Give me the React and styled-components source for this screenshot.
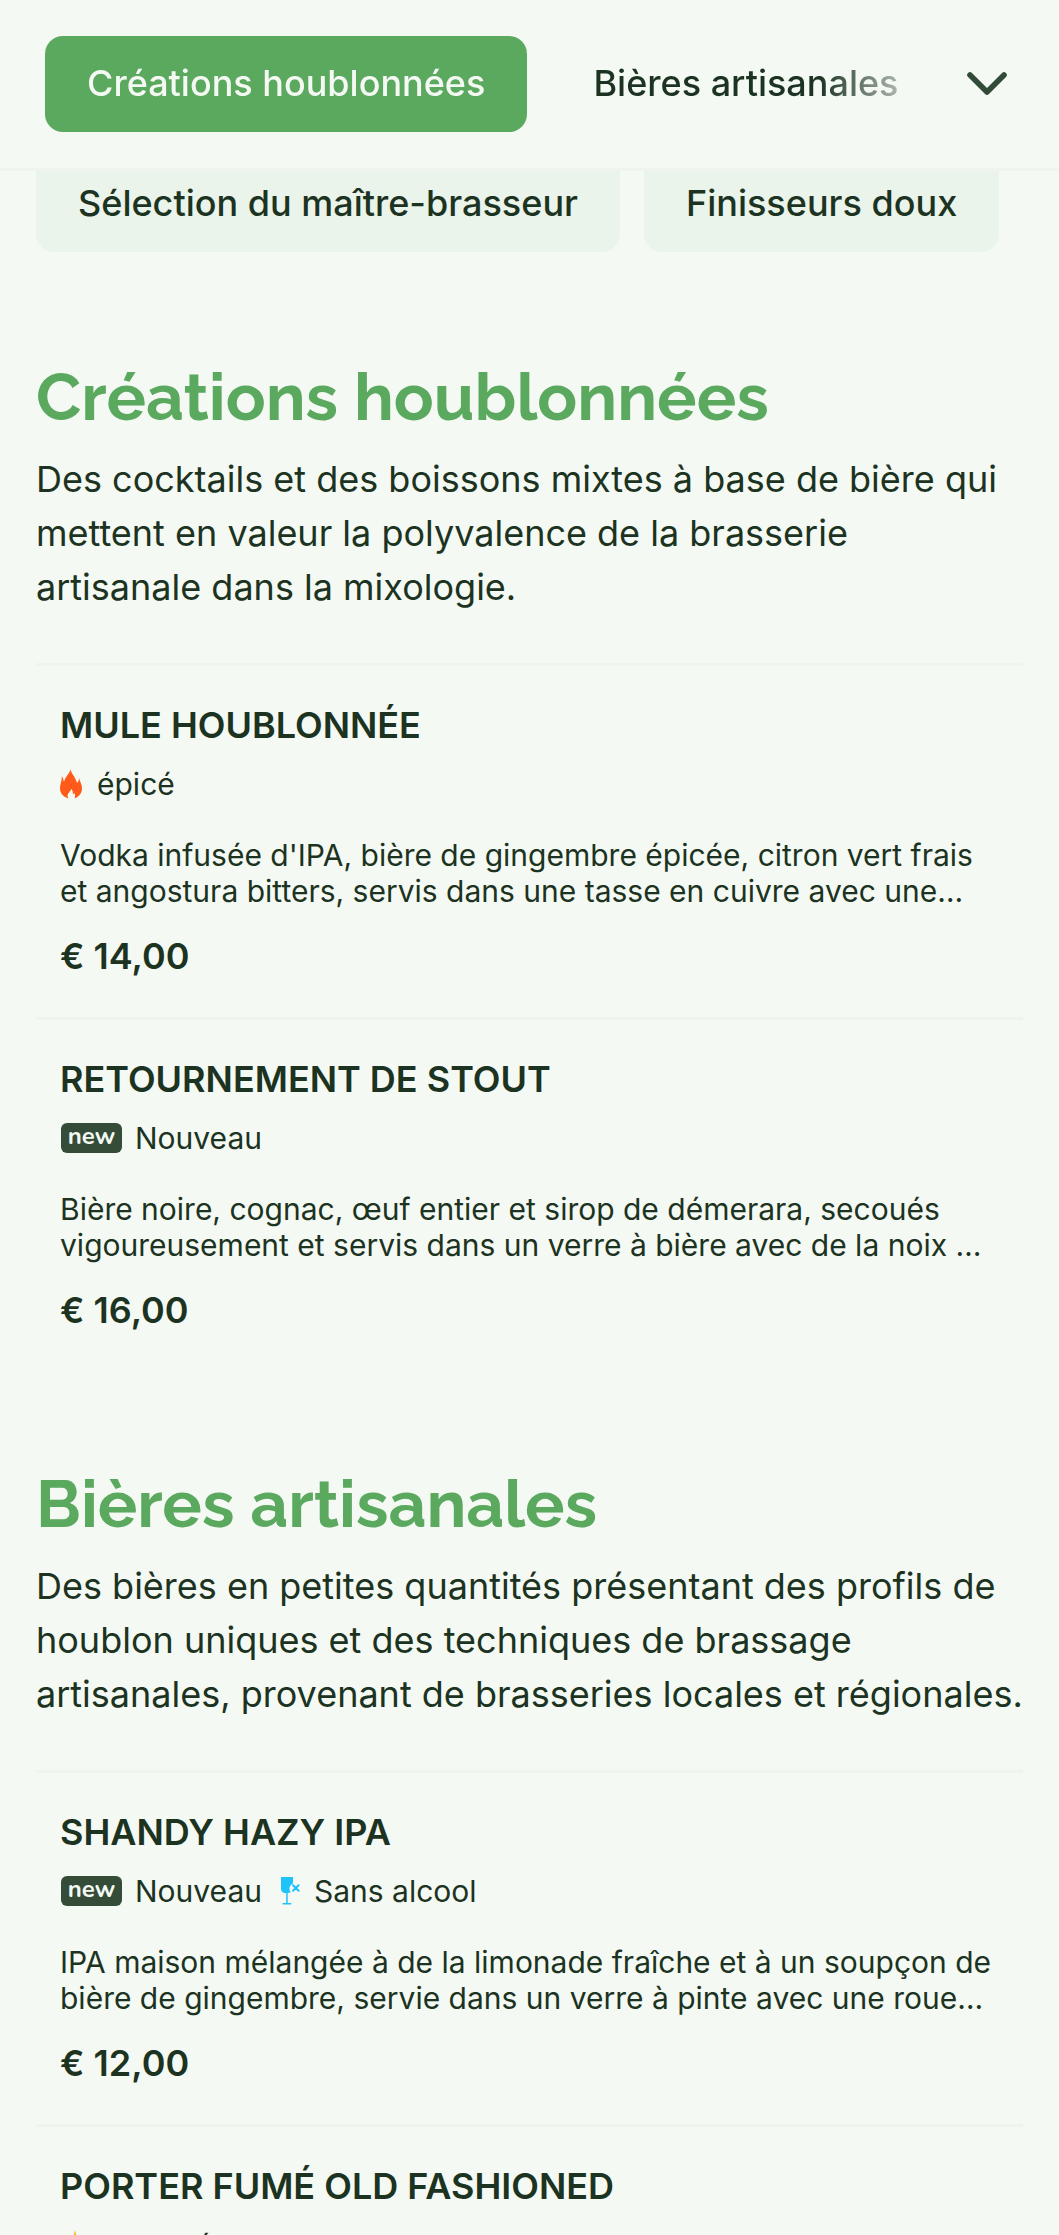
import React from "react";
import styled, { createGlobalStyle, css } from "styled-components";

const sections = [
  {
    id: "creations",
    title: "Créations houblonnées",
    text:
      "Des cocktails et des boissons mixtes à base de bière qui mettent en valeur la polyvalence de la brasserie artisanale dans la mixologie.",
    items: [
      {
        name: "MULE HOUBLONNÉE",
        tags: ["spicy"],
        text:
          "Vodka infusée d'IPA, bière de gingembre épicée, citron vert frais et angostura bitters, servis dans une tasse en cuivre avec une…",
        price: "€ 14,00"
      },
      {
        name: "RETOURNEMENT DE STOUT",
        tags: ["new"],
        text:
          "Bière noire, cognac, œuf entier et sirop de démerara, secoués vigoureusement et servis dans un verre à bière avec de la noix …",
        price: "€ 16,00"
      }
    ]
  },
  {
    id: "bieres",
    title: "Bières artisanales",
    text:
      "Des bières en petites quantités présentant des profils de houblon uniques et des techniques de brassage artisanales, provenant de brasseries locales et régionales.",
    items: [
      {
        name: "SHANDY HAZY IPA",
        tags: ["new", "soft"],
        text:
          "IPA maison mélangée à de la limonade fraîche et à un soupçon de bière de gingembre, servie dans un verre à pinte avec une roue…",
        price: "€ 12,00"
      },
      {
        name: "PORTER FUMÉ OLD FASHIONED",
        tags: ["shared"]
      }
    ]
  }
];

const FlameIcon = () => (
  <svg width="24" height="30" viewBox="0 0 24 30" aria-hidden="true">
    <path
      fill="#ff5a1a"
      d="M10.6 0C10.8 4.4 16 8.6 17 14C18.4 12.8 19.2 11 19 8.8C19.6 12.4 22 15 22 19.4C22 24 19 27.8 14.6 29.2C15.4 27.4 15.2 25.4 14.2 24C13.9 24.6 13.5 25 12.9 25.2C13.1 23.2 12.5 21.4 11.2 20C10.8 22.4 8.2 23.6 7.6 26C7.4 27.2 7.7 28.4 8.4 29.4C3.6 28 0 24.4 0 19.2C0 15 2 12 1.8 7.6C3 9 3.6 10.6 3.6 12.6C4 12.4 4.4 12 4.6 11.6C5.4 7.4 9.6 5 10.6 0Z"
    />
  </svg>
);

const GlassIcon = () => (
  <svg width="21" height="28" viewBox="0 0 21 28" aria-hidden="true">
    <path
      fill="#1fc3fa"
      d="M1 0H13V6.5C10.6 7.8 9.4 9.6 9.4 11.6C9.4 13 9.9 14.3 10.8 15.3C9.8 15.8 8.8 16 7.7 16V26H11.2V27.4H2.6V26H6.2V16H5C2.6 16 1 14.2 1 11.8Z"
    />
    <path
      stroke="#1fc3fa"
      strokeWidth="2"
      fill="none"
      strokeLinecap="round"
      d="M13 8.2L18.6 13.8M18.6 8.2L13 13.8"
    />
  </svg>
);

const StarIcon = () => (
  <svg width="30" height="30" viewBox="0 0 30 30" aria-hidden="true">
    <path
      fill="#f2c230"
      d="M15 0L18 11L30 11.4L21 18L24.4 29L15 22.8L5.6 29L9 18L0 11.4L12 11Z"
    />
  </svg>
);

const tagTypes = {
  spicy: { label: "épicé", icon: <FlameIcon /> },
  soft: { label: "Sans alcool", icon: <GlassIcon /> },
  shared: { label: "partagé", icon: <StarIcon /> }
};

const MenuTag = ({ type }) =>
  type === "new" ? (
    <Tag>
      <NewBadge>new</NewBadge>
      Nouveau
    </Tag>
  ) : (
    <Tag>
      {tagTypes[type].icon}
      {tagTypes[type].label}
    </Tag>
  );

const MenuItem = ({ name, tags, text, price }) => (
  <Item>
    <ItemName>{name}</ItemName>
    <Tags>
      {tags.map(type => (
        <MenuTag key={type} type={type} />
      ))}
    </Tags>
    {text && <ItemText>{text}</ItemText>}
    {price && <Price>{price}</Price>}
  </Item>
);

export default () => (
  <>
    <GlobalStyle />
    <Header>
      <Nav>
        <Tab href="#creations" $active>
          Créations houblonnées
        </Tab>
        <Tab href="#bieres">Bières artisanales</Tab>
      </Nav>
      <Toggle type="button" aria-label="Toutes les catégories">
        <svg width="42" height="26" viewBox="0 0 42 26" fill="none" aria-hidden="true">
          <path
            d="M4 4L21 21L38 4"
            stroke="#324a38"
            strokeWidth="5.6"
            strokeLinecap="round"
            strokeLinejoin="round"
          />
        </svg>
      </Toggle>
    </Header>
    <Main>
      <Chips>
        <Chip href="#selection">Sélection du maître-brasseur</Chip>
        <Chip href="#finisseurs">Finisseurs doux</Chip>
      </Chips>
      {sections.map(section => (
        <Section key={section.id} id={section.id}>
          <Title>{section.title}</Title>
          <Intro>{section.text}</Intro>
          <List>
            {section.items.map(item => (
              <MenuItem key={item.name} {...item} />
            ))}
          </List>
        </Section>
      ))}
    </Main>
  </>
);

const GlobalStyle = createGlobalStyle`
  * {
    box-sizing: border-box;
  }
  body {
    margin: 0;
    background: #f4f9f3;
    color: #1c3322;
    font-family: Inter, "Liberation Sans", sans-serif;
    font-size: 36px;
  }
`;

const Header = styled.header`
  position: fixed;
  z-index: 1;
  top: 0;
  left: 0;
  right: 0;
  display: flex;
  align-items: center;
  padding: 36px 24px 36px 0;
  background: #f4f9f3;
  border-bottom: 3px solid #eff5ee;
`;

const Nav = styled.nav`
  flex: 1;
  min-width: 0;
  display: flex;
  gap: 24px;
  padding-left: 45px;
  overflow: hidden;
  mask-image: linear-gradient(
    to right,
    #000 calc(100% - 120px),
    transparent
  );
`;

const pill = css`
  flex: none;
  padding: 0 42px 2px;
  border-radius: 18px;
  line-height: 94px;
  font-weight: 500;
  color: inherit;
  text-decoration: none;
  white-space: nowrap;
`;

const Tab = styled.a`
  ${pill};
  ${props =>
    props.$active &&
    css`
      background: #5ba85f;
      color: #f4f9f3;
    `};
`;

const Toggle = styled.button`
  display: flex;
  align-items: center;
  justify-content: center;
  width: 96px;
  height: 96px;
  padding: 0;
  border: 0;
  background: none;
  cursor: pointer;
`;

const Main = styled.main`
  padding: 156px 36px 0;
`;

const Chips = styled.div`
  display: flex;
  flex-wrap: wrap;
  gap: 24px;
  margin-bottom: 12px;
`;

const Chip = styled.a`
  ${pill};
  background: #eaf4ea;
`;

const Section = styled.section`
  padding-top: 92px;
`;

const Title = styled.h2`
  margin: 0 0 14px;
  font-family: Raleway, Lato, sans-serif;
  font-size: 66px;
  line-height: 82px;
  font-weight: 700;
  color: #5ba85f;
`;

const Intro = styled.p`
  margin: 0 0 49px;
  line-height: 54px;
`;

const List = styled.ul`
  margin: 0;
  padding: 0;
  list-style: none;
`;

const Item = styled.li`
  padding: 35px 24px 37px;
  border-top: 3px solid #eff4ee;
`;

const ItemName = styled.h3`
  margin: 0 0 17px;
  font-size: 36px;
  line-height: 48px;
  font-weight: 600;
`;

const Tags = styled.div`
  display: flex;
  flex-wrap: wrap;
  gap: 18px;
`;

const Tag = styled.span`
  display: flex;
  align-items: center;
  gap: 13px;
  font-size: 30px;
  line-height: 36px;
`;

const NewBadge = styled.span`
  width: 61px;
  height: 30px;
  margin-left: 1px;
  border-radius: 6px;
  background: #344c38;
  color: #f4f9f3;
  font-family: Nunito, Lato, sans-serif;
  font-size: 24px;
  line-height: 27px;
  font-weight: 700;
  text-align: center;
`;

const ItemText = styled.p`
  margin: 35px 0 23px;
  font-size: 30px;
  line-height: 36px;
`;

const Price = styled.div`
  line-height: 48px;
  font-weight: 600;
`;
